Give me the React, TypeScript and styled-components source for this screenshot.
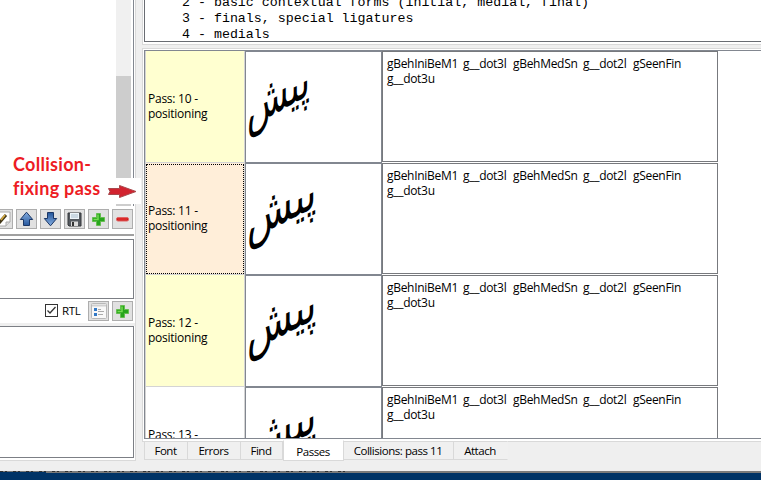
import React from "react";
import styled, { createGlobalStyle } from "styled-components";

const Global = createGlobalStyle`
  * { box-sizing: border-box; }
  body { margin: 0; background: #efefef; overflow: hidden; }
`;

const Window = styled.div`
  width: 761px;
  height: 480px;
  display: flex;
  flex-direction: column;
  overflow: hidden;
  background: #efefef;
  color: #000;
  font: 12px/15px "Open Sans", "Noto Sans", sans-serif;
`;
const Main = styled.div`
  height: 471px;
  display: flex;
`;

/* left side */
const Left = styled.div`
  width: 136px;
  height: 461px;
  flex: none;
  position: relative;
  background: #fff;
  border-right: 1px solid #d9d9d9;
  border-bottom: 1px solid #d9d9d9;
`;
const Preview = styled.div`
  height: 206px;
  width: 134px;
  border-right: 1px solid #828790;
  display: flex;
  justify-content: flex-end;
  padding-right: 2px;
`;
const Scroll = styled.div`
  width: 15px;
  height: 100%;
  background: #f0f0f0;
  padding-top: 76px;
`;
const Thumb = styled.div`
  height: 130px;
  background: #cdcdcd;
`;
const Note = styled.div`
  position: absolute;
  left: 0;
  top: 152px;
  width: 116px;
  height: 52px;
  padding: 0 0 0 13px;
  background: #fff;
  color: #ed1c24;
  font: bold 18px/24px Lato, sans-serif;
  white-space: nowrap;
`;
const NoteLine = styled.div`
  letter-spacing: 0.3px;
`;
const ArrowPatch = styled.div`
  position: absolute;
  left: 101px;
  top: 178px;
  width: 40px;
  height: 26px;
  background: #fff;
`;
const Tools = styled.div`
  display: flex;
  gap: 3px;
  justify-content: flex-end;
  width: 133px;
  height: 27px;
  padding-top: 3px;
`;
const Tool = styled.div`
  width: 21px;
  height: 20px;
  flex: none;
  border: 1px solid #adadad;
  background: #e1e1e1;
  display: flex;
  align-items: center;
  justify-content: center;
  svg { display: block; flex: none; }
`;
const Splitter = styled.div`
  height: 2px;
  width: 134px;
  margin-top: 1px;
  background: #a0a0a0;
`;
const Box = styled.div<{ $h: number; $mt: number }>`
  width: 134px;
  height: ${(p) => p.$h}px;
  margin-top: ${(p) => p.$mt}px;
  background: #fff;
  border: 1px solid #7c7f85;
  border-left: 0;
`;
const Options = styled.div`
  height: 24px;
  width: 133px;
  display: flex;
  justify-content: flex-end;
  padding-top: 2px;
  gap: 3px;
`;
const Check = styled.div`
  width: 13px;
  height: 13px;
  margin-top: 3px;
  border: 1px solid #333;
  display: flex;
`;
const RtlLabel = styled.div`
  width: 24px;
  padding: 2px 0 0 1px;
  font-size: 11.5px;
  letter-spacing: -0.3px;
`;
const Gap = styled.div`
  height: 3px;
  background: #efefef;
`;

/* right side */
const Right = styled.div`
  flex: 1;
  min-width: 0;
  margin-left: 6px;
`;
const TopFrame = styled.div`
  height: 45px;
  border-left: 1px solid #d9d9d9;
  border-bottom: 1px solid #d9d9d9;
  background: #fff;
  padding-left: 1px;
`;
const Code = styled.pre`
  margin: 0;
  height: 42px;
  overflow: hidden;
  border-left: 1px solid #696c72;
  border-bottom: 1px solid #696c72;
  padding-left: 37px;
  display: flex;
  flex-direction: column;
  justify-content: flex-end;
  font: 13.3px/16px "Liberation Mono", monospace;
  span:last-child { margin-bottom: -2px; }
`;
const PassFrame = styled.div`
  margin-top: 3px;
  height: 394px;
  border: 1px solid #d9d9d9;
  border-right: 0;
  background: #fff;
  padding: 1px 0 2px 1px;
`;
const Table = styled.div`
  height: 389px;
  overflow: hidden;
  border: 1px solid #828790;
  border-right: 0;
`;
const Row = styled.div`
  height: 112px;
  display: grid;
  grid-template-columns: 100px 137px 336px;
`;
const Name = styled.div<{ $tone: string; $focus?: boolean }>`
  border-left: 1px solid #d4d4d4;
  border-right: 1px solid #d4d4d4;
  border-bottom: 1px solid #d4d4d4;
  background: ${(p) => p.$tone};
  display: flex;
  align-items: center;
  padding: 0 0 1px 2px;
  letter-spacing: -0.25px;
  outline: ${(p) => (p.$focus ? "1px dotted #000" : "none")};
  outline-offset: -2px;
`;
const Sample = styled.div`
  border: 1px solid #828790;
  display: flex;
  padding: 18px 0 0 1px;
  overflow: hidden;
`;
const Word = styled.div<{ $wide: boolean }>`
  height: 50px;
  flex: none;
  direction: rtl;
  font: 34px/50px "DejaVu Sans", sans-serif;
  white-space: nowrap;
  transform-origin: 0 50%;
  transform: translateY(14px) scaleX(${(p) => (p.$wide ? 1.1 : 1)}) skewY(-28deg) scaleY(1.6);
`;
const Glyphs = styled.div`
  height: 111px;
  border: 1px solid #77797d;
  padding: 4px;
`;
const GlyphLine = styled.div`
  display: flex;
  gap: 6px;
`;
const Glyph = styled.span<{ $w: number }>`
  width: ${(p) => p.$w}px;
  letter-spacing: -0.3px;
  white-space: nowrap;
`;
const Tabs = styled.div`
  display: flex;
  padding-left: 2px;
  margin-top: -1px;
  position: relative;
`;
const Tab = styled.div<{ $w: number; $on?: boolean }>`
  width: ${(p) => p.$w}px;
  height: ${(p) => (p.$on ? 21 : 19)}px;
  margin-top: ${(p) => (p.$on ? -1 : 0)}px;
  padding: ${(p) => (p.$on ? 3 : 1)}px 1px 0 0;
  text-align: center;
  white-space: nowrap;
  font-size: 11.5px;
  letter-spacing: -0.45px;
  background: ${(p) => (p.$on ? "#fff" : "#f0f0f0")};
  border: 1px solid #d9d9d9;
  border-left-width: ${(p) => (p.$on ? 1 : 0)}px;
  border-top-color: ${(p) => (p.$on ? "#fff" : "#d9d9d9")};
  &:first-child { border-left-width: 1px; }
  &:last-child { border-right-color: #f0f0f0; }
`;
const Edge = styled.div`
  height: 2px;
  background:
    linear-gradient(#003366, #003366) 0 1px / 46px 1px no-repeat,
    repeating-linear-gradient(90deg, #333 0 3px, transparent 3px 5px, #333 5px 7px, transparent 7px 13px) 0 0 / 345px 1px no-repeat,
    #7a7a7a;
`;
const Desktop = styled.div`
  flex: 1;
  background: #003366;
`;

const Plus = () => (
  <svg width="15" height="15" viewBox="0 0 15 15">
    <path d="M5.5 1.5h4v4h4v4h-4v4h-4v-4h-4v-4h4z" fill="#27a51c" stroke="#65bd50" strokeLinejoin="round" />
    <path d="M7 2.5v5H2.5" fill="none" stroke="#75dc52" strokeWidth="1.5" />
  </svg>
);
const BlueArrow = ({ down }: { down?: boolean }) => (
  <svg width="15" height="16" viewBox="0 0 15 16">
    <defs>
      <linearGradient id="blue" x2="0" y2="1">
        <stop offset="0" stopColor="#86aee0" />
        <stop offset="1" stopColor="#24569c" />
      </linearGradient>
    </defs>
    <path
      d="M7.5 1.2 13.7 8.5H10.5V14.5H4.5V8.5H1.3z"
      fill="url(#blue)"
      stroke="#1c3765"
      strokeLinejoin="round"
      transform={down ? "rotate(180 7.5 8)" : undefined}
    />
  </svg>
);
const Pencil = () => (
  <svg width="17" height="16" viewBox="0 0 17 16">
    <path d="M1 1h15v10l-4 4H1z" fill="#fff" stroke="#aaa" />
    <path d="M12 15v-4h4" fill="#ddd" stroke="#aaa" />
    <path d="m5 12 7-8" stroke="#403518" strokeWidth="3" />
    <path d="m7 9 4-5" stroke="#d9ad3f" strokeWidth="1.5" />
  </svg>
);
const Disk = () => (
  <svg width="15" height="15" viewBox="0 0 15 15">
    <path d="M1 1h13v13H2l-1-1z" fill="#555a60" stroke="#34373b" />
    <path d="M3 1h9v6H3z" fill="#eef5fa" />
    <path d="M4 3h7M4 5h7" stroke="#a9bccb" />
    <path d="M4 9.5h7V14H4z" fill="#dcdcdc" />
    <path d="M5 10h2v4H5z" fill="#333" />
  </svg>
);
const Minus = () => (
  <svg width="15" height="15" viewBox="0 0 15 15">
    <rect x="1.5" y="5.5" width="12" height="3.5" rx="1.5" fill="#cf1717" stroke="#df6464" />
    <path d="M3 7h9" stroke="#e63a3a" />
  </svg>
);
const ListIcon = () => (
  <svg width="16" height="16" viewBox="0 0 16 16">
    <rect x=".5" y=".5" width="15" height="15" rx="1" fill="#f8f8f8" stroke="#b8b8b8" />
    <path d="M1 2.5h14" stroke="#d0d0d0" strokeWidth="2" />
    <path d="M3 5h3v3H3zM3 10h3v3H3z" fill="#3178c6" />
    <path d="M7 6.5h3M7 8.500h6M7 11.500h5" stroke="#aaa" />
  </svg>
);
const RedArrow = () => (
  <svg width="40" height="26" viewBox="0 0 40 26">
    <path d="M7.500 10.500H18.500V7.500L35 13.500 18.500 19.500V16.500H7.500l1.500-3z" fill="#d2232f" stroke="#a8484c" />
  </svg>
);

const passes = [
  { n: 10, tone: "#ffffd0" },
  { n: 11, tone: "#ffeed9" },
  { n: 12, tone: "#ffffd0" },
  { n: 13, tone: "#ffffff" },
];
const glyphs: [string, number][] = [
  ["gBehIniBeM1", 70],
  ["g__dot3l", 44],
  ["gBehMedSn", 64],
  ["g__dot2l", 44],
  ["gSeenFin", 50],
];

export default function App() {
  return (
    <Window>
      <Global />
      <Main>
        <Left>
          <Preview>
            <Scroll><Thumb /></Scroll>
          </Preview>
          <Note>
            <NoteLine>Collision-</NoteLine>
            <NoteLine>fixing pass</NoteLine>
          </Note>
          <ArrowPatch><RedArrow /></ArrowPatch>
          <Tools>
            <Tool><Pencil /></Tool>
            <Tool><BlueArrow /></Tool>
            <Tool><BlueArrow down /></Tool>
            <Tool><Disk /></Tool>
            <Tool><Plus /></Tool>
            <Tool><Minus /></Tool>
          </Tools>
          <Splitter />
          <Box $h={60} $mt={3} />
          <Options>
            <Check>
              <svg width="11" height="11" viewBox="0 0 11 11">
                <path d="M1.500 5.500 4 8l5.500-6" fill="none" stroke="#333" strokeWidth="1.3" />
              </svg>
            </Check>
            <RtlLabel>RTL</RtlLabel>
            <Tool><ListIcon /></Tool>
            <Tool><Plus /></Tool>
          </Options>
          <Gap />
          <Box $h={132} $mt={0} />
        </Left>
        <Right>
          <TopFrame>
            <Code>
              <span>2 - basic contextual forms (initial, medial, final)</span>
              <span>3 - finals, special ligatures</span>
              <span>4 - medials</span>
            </Code>
          </TopFrame>
          <PassFrame>
            <Table>
              {passes.map((p) => (
                <Row key={p.n}>
                  <Name $tone={p.tone} $focus={p.n === 11}>
                    <div>Pass: {p.n} -<br />positioning</div>
                  </Name>
                  <Sample><Word $wide={p.n > 10}>پیش</Word></Sample>
                  <Glyphs>
                    <GlyphLine>
                      {glyphs.map(([t, w]) => <Glyph key={t} $w={w}>{t}</Glyph>)}
                    </GlyphLine>
                    <GlyphLine><Glyph $w={50}>g__dot3u</Glyph></GlyphLine>
                  </Glyphs>
                </Row>
              ))}
            </Table>
          </PassFrame>
          <Tabs>
            <Tab $w={44}>Font</Tab>
            <Tab $w={53}>Errors</Tab>
            <Tab $w={42}>Find</Tab>
            <Tab $w={61} $on>Passes</Tab>
            <Tab $w={110}>Collisions: pass 11</Tab>
            <Tab $w={54}>Attach</Tab>
          </Tabs>
        </Right>
      </Main>
      <Edge />
      <Desktop />
    </Window>
  );
}
